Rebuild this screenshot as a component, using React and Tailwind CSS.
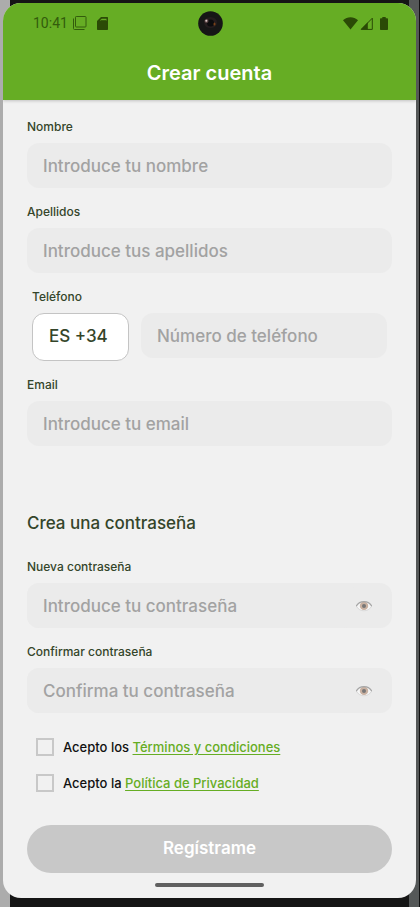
import { useState } from "react";

const inputClass =
  "h-[45px] w-full min-w-0 rounded-xl bg-[#ebebeb] px-4 text-[17px] font-medium text-[#34452a] outline-none placeholder:text-[#a2a2a2] placeholder:opacity-100";
const labelClass = "block text-[12px] leading-4 font-medium text-[#34452a]";

function SignalIcons() {
  return (
    <div className="flex items-center text-[#2b4a06]">
      <svg width="15" height="13" viewBox="0 0 15 13" fill="currentColor" aria-hidden="true">
        <path d="M7.500 12.600 0 3.300C4.300-.9 10.700-.9 15 3.300z" />
      </svg>
      <svg className="ml-0.5" width="13" height="13" viewBox="0 0 13 13" aria-hidden="true">
        <path d="M12.300 1.200v11.200H1.200z" fill="none" stroke="currentColor" />
        <path d="M7.800 5.200V12.500H.8z" fill="currentColor" />
      </svg>
      <svg className="ml-[7px]" width="8" height="13" viewBox="0 0 8 13" fill="currentColor" aria-hidden="true">
        <path d="M2.300 0h3.400v1.200H7c.6 0 1 .4 1 1V12c0 .6-.4 1-1 1H1c-.6 0-1-.4-1-1V2.200c0-.6.4-1 1-1h1.300z" />
      </svg>
    </div>
  );
}

function StatusBar() {
  return (
    <div className="grid h-10 grid-cols-[1fr_auto_1fr] items-center pr-7 pl-[30px]">
      <div className="flex items-center text-[#2b4a06]">
        <span className="font-[Roboto,sans-serif] text-[14px] leading-5 text-[#335c0c]">10:41</span>
        <svg className="ml-[5px]" width="14" height="14" viewBox="0 0 14 14" fill="none" stroke="#335c0c" aria-hidden="true">
          <rect x="2.500" y=".5" width="10.500" height="10.500" rx=".8" />
          <path d="M.5 2.500V12.500c0 .6.400 1 1 1h10" />
        </svg>
        <svg className="ml-2.5" width="11" height="13" viewBox="0 0 11 13" aria-hidden="true">
          <path fill="currentColor" d="M4 0h6c.6 0 1 .4 1 1v11c0 .6-.4 1-1 1H1c-.6 0-1-.4-1-1V4z" />
          <path d="M3.300 4V3L4.800 1.800H9.500V4z" fill="#66ad24" />
          <path d="M3.500 3.700h6" stroke="currentColor" />
        </svg>
      </div>
      <Camera />
      <div className="flex justify-end">
        <SignalIcons />
      </div>
    </div>
  );
}

function Camera() {
  return (
    <svg width="25" height="25" viewBox="0 0 25 25" aria-hidden="true">
      <circle cx="12.500" cy="12.500" r="12.300" fill="#161616" />
      <ellipse cx="12.500" cy="11.500" rx="6.500" ry="5.500" fill="#241c1e" />
      <circle cx="12.500" cy="12" r="3.500" fill="#0b0b0d" />
      <circle cx="8.500" cy="10" r="2" fill="#5b4545" />
      <circle cx="8.300" cy="9.800" r="1" fill="#d8c8c8" />
      <ellipse cx="16.500" cy="13" rx="1" ry="1.500" fill="#7a4218" />
    </svg>
  );
}

function EyeIcon() {
  return (
    <svg width="16" height="12" viewBox="0 0 16 12" aria-hidden="true">
      <path d="M.3 6C3.500.6 12.500.6 15.700 6 12.500 12.400 3.500 12.400 .3 6z" fill="#f6f6f6" stroke="#cfcfcf" strokeWidth=".7" />
      <circle cx="8" cy="5.900" r="4.200" fill="#c9b1a1" />
      <circle cx="8" cy="6" r="2" fill="#777" />
      <path d="M.2 6.200C3.500.1 12.500.1 15.800 6.200" fill="none" stroke="#a6a6a6" strokeWidth="1.200" />
    </svg>
  );
}

function Field({ id, label, placeholder, type = "text" }) {
  return (
    <div className="flex flex-col gap-2">
      <label htmlFor={id} className={labelClass}>{label}</label>
      <input id={id} type={type} placeholder={placeholder} className={inputClass} />
    </div>
  );
}

function PasswordField({ id, label, placeholder }) {
  const [visible, setVisible] = useState(false);
  return (
    <div className="flex flex-col gap-2">
      <label htmlFor={id} className={labelClass}>{label}</label>
      <div className="flex items-center rounded-xl bg-[#ebebeb] pr-5">
        <input id={id} type={visible ? "text" : "password"} placeholder={placeholder} className={inputClass} />
        <button type="button" className="shrink-0" aria-label="Mostrar contraseña" onClick={() => setVisible(!visible)}>
          <EyeIcon />
        </button>
      </div>
    </div>
  );
}

function Consent({ id, text, link }) {
  return (
    <div className="flex items-center gap-[9px]">
      <input
        id={id}
        type="checkbox"
        className="size-[18px] shrink-0 appearance-none border-2 border-[#c8c8c8] checked:bg-[#66ad24]"
      />
      <label htmlFor={id} className="text-[13px] leading-[18px] font-medium text-[#111]">
        {text}{" "}
        <a href="#" className="text-[#66ad24] underline underline-offset-2">{link}</a>
      </label>
    </div>
  );
}

export default function App() {
  return (
    <div className="border-r border-[#111] bg-linear-to-r from-[#acacac] from-50% to-[#555858] to-50% font-[Inter,sans-serif]">
      <div className="min-h-screen bg-[linear-gradient(#151515,#151515)] bg-[length:calc(100%-20px)_100%] bg-center bg-no-repeat pt-[3px] pr-[3px] pb-[9px] pl-[3px]">
        <div className="overflow-hidden rounded-[18px] bg-[#f1f1f1]">
          <header className="bg-[#66ad24] shadow-[0_1px_3px_rgba(0,0,0,0.2)]">
            <StatusBar />
            <h1 className="h-[57px] pt-[18px] text-center text-[20px] leading-6 font-semibold text-white">Crear cuenta</h1>
          </header>
          <form className="px-6 pt-[19px]" onSubmit={(e) => e.preventDefault()}>
            <div className="flex flex-col gap-4">
              <Field id="nombre" label="Nombre" placeholder="Introduce tu nombre" />
              <Field id="apellidos" label="Apellidos" placeholder="Introduce tus apellidos" />
              <div className="flex flex-col gap-2 px-[5px]">
                <label htmlFor="telefono" className={labelClass}>Teléfono</label>
                <div className="flex items-start gap-3">
                  <select
                    aria-label="Prefijo"
                    className="h-12 w-[97px] shrink-0 appearance-none rounded-xl border border-[#c4c4c4] bg-white px-4 text-[17px] font-medium text-[#34452a]"
                  >
                    <option>ES +34</option>
                  </select>
                  <input id="telefono" type="tel" placeholder="Número de teléfono" className={inputClass} />
                </div>
              </div>
              <Field id="email" label="Email" placeholder="Introduce tu email" />
            </div>
            <h2 className="mt-[67px] text-[17px] leading-5 font-medium text-[#34452a]">Crea una contraseña</h2>
            <div className="mt-[26px] flex flex-col gap-4">
              <PasswordField id="nueva" label="Nueva contraseña" placeholder="Introduce tu contraseña" />
              <PasswordField id="confirmar" label="Confirmar contraseña" placeholder="Confirma tu contraseña" />
            </div>
            <div className="mt-[25px] flex flex-col gap-[18px] pl-[9px]">
              <Consent id="terminos" text="Acepto los" link="Términos y condiciones" />
              <Consent id="privacidad" text="Acepto la" link="Política de Privacidad" />
            </div>
            <button
              type="submit"
              className="mt-[33px] h-12 w-full rounded-full bg-[#c8c8c8] text-[17px] font-semibold text-white"
            >
              Regístrame
            </button>
          </form>
          <div className="flex justify-center pt-2.5 pb-[11px]">
            <div className="h-1 w-[109px] rounded-full bg-[#606060]" />
          </div>
        </div>
      </div>
    </div>
  );
}
